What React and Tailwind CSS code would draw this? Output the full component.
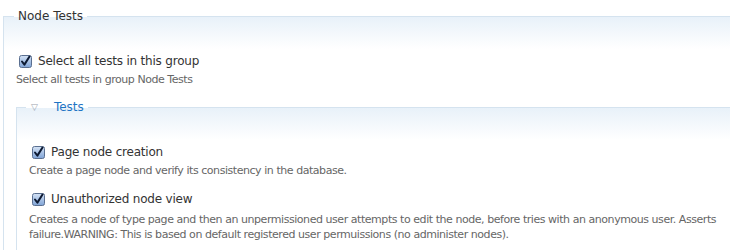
function Check() {
  return (
    <svg width="13" height="13" viewBox="0 0 13 13" className="shrink-0">
      <defs>
        <linearGradient id="cb" x1="0" y1="0" x2="0" y2="1">
          <stop offset="0" stopColor="#d5e3f5" />
          <stop offset="1" stopColor="#7fa3d6" />
        </linearGradient>
      </defs>
      <rect x="0.5" y="0.5" width="12" height="12" rx="2" fill="url(#cb)" stroke="#5a6f90" />
      <path d="M3 6.5 L5.4 9.6 L10.5 1.5" fill="none" stroke="#0d1a33" strokeWidth="2" strokeLinecap="round" strokeLinejoin="round" />
    </svg>
  )
}

function Test({ label, gap = 'mt-[3px]', children }) {
  return (
    <div>
      <label className="flex items-center gap-[6px] pl-[3px] text-[12px] leading-[16px] tracking-[-0.2px] text-[#333]">
        <Check />
        {label}
      </label>
      <p className={`${gap} text-[11px] leading-[15px] tracking-[-0.45px] text-[#666]`}>{children}</p>
    </div>
  )
}

export default function App() {
  return (
    <div className="h-[250px] w-[730px] overflow-hidden bg-white font-['DejaVu_Sans',sans-serif]">
      <fieldset className="ml-[3px] mt-[8px] w-[780px] border border-[#d5e3ef] bg-[linear-gradient(to_bottom,#e8f1f9,#ffffff_32px)] px-[12px] pb-4">
        <legend className="-ml-[2px] px-1 text-[12px] leading-[16px] text-[#333]">Node Tests</legend>

        <div className="mt-[29px]">
          <Test label="Select all tests in this group">Select all tests in group Node Tests</Test>
        </div>

        <fieldset className="mt-[12px] border border-[#d5e3ef] bg-[linear-gradient(to_bottom,#e8f1f9,#ffffff_32px)] px-[12px] pb-4">
          <legend className="-ml-[3px] flex items-center pl-[5px] pr-1 text-[12px] leading-[16px] text-[#1f75c4]">
            <span className="mr-[16px] text-[9px] text-[#9aa4ae]">▽</span>
            Tests
          </legend>

          <div className="mt-[29px] flex flex-col gap-[13px]">
            <Test label="Page node creation">Create a page node and verify its consistency in the database.</Test>
            <Test label="Unauthorized node view" gap="mt-[5px]">
              <span className="block w-[690px]">
                Creates a node of type page and then an unpermissioned user attempts to edit the node, before tries with an anonymous user. Asserts failure.WARNING: This is based on default registered user permuissions (no administer nodes).
              </span>
            </Test>
          </div>
        </fieldset>
      </fieldset>
    </div>
  )
}
